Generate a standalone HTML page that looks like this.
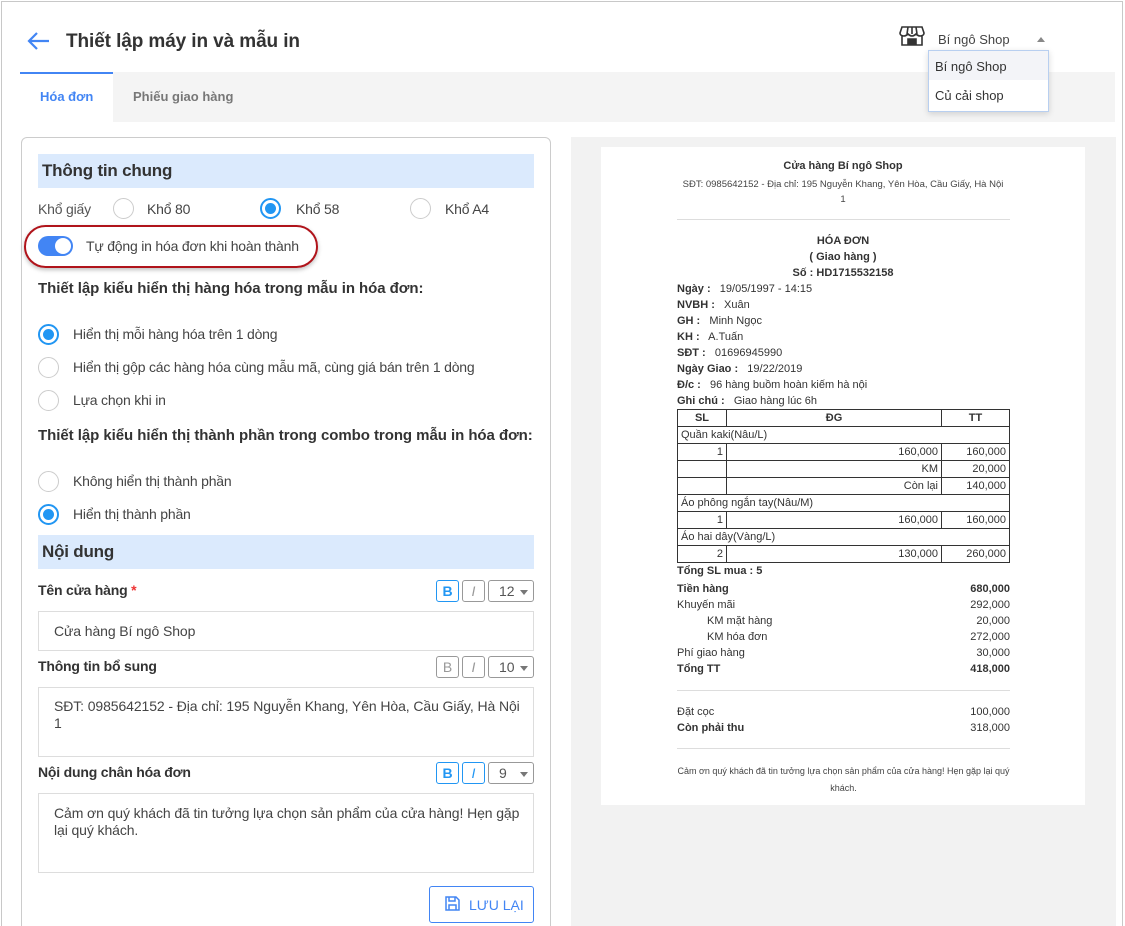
<!DOCTYPE html>
<html><head><meta charset="utf-8"><style>
*{box-sizing:border-box;margin:0;padding:0}
html,body{width:1125px;height:926px;overflow:hidden}
body{background:#fff;font-family:"Liberation Sans",sans-serif;color:#333;position:relative}
.a{position:absolute;white-space:nowrap}
.frame{position:absolute;left:1px;top:1px;width:1122px;height:940px;border:1px solid #c8c8c8}
.hdr{position:absolute;left:38px;width:496px;height:34px;background:#dbeafd;font-size:17px;font-weight:bold;color:#333;padding:7px 0 0 4px;letter-spacing:-0.2px}
.rad{position:absolute;width:21px;height:21px;border:1px solid #ccc;border-radius:50%;background:#fff}
.rad.on{border:2px solid #2196f3}
.rad.on::after{content:"";position:absolute;left:3px;top:3px;width:11px;height:11px;border-radius:50%;background:#2196f3}
.lb{font-size:14px;color:#444;letter-spacing:-0.2px}
.bh{font-size:15px;font-weight:bold;color:#333;letter-spacing:-0.05px}
.fl{font-size:14px;font-weight:bold;color:#333;letter-spacing:-0.2px}
.btn{position:absolute;width:23px;height:22px;border:1px solid #999;border-radius:3px;text-align:center;font-size:14px;line-height:20px;color:#999}
.btn.on{border-color:#2196f3;color:#2196f3}
.sel{position:absolute;width:46px;height:22px;border:1px solid #999;border-radius:3px;font-size:14px;line-height:20px;padding-left:10px;color:#555}
.sel::after{content:"";position:absolute;right:5px;top:9px;border:4px solid transparent;border-top:5px solid #777}
.inp{position:absolute;left:38px;width:496px;border:1px solid #ddd;font-size:14px;color:#444;padding:0 15px;line-height:17px;white-space:nowrap;overflow:hidden;letter-spacing:-0.1px}
.r{font-size:11px;color:#333}
table{border-collapse:collapse;font-size:11px;color:#333}
td{border:1px solid #333;height:17px;padding:0 3px;text-align:right}
</style></head><body>
<div class="frame"></div>
<svg class="a" style="left:26px;top:31px" width="24" height="20" viewBox="0 0 24 20"><path d="M23 10H3M11 2L3 10l8 8" fill="none" stroke="#4285f4" stroke-width="2.2"/></svg>
<div class="a" style="left:66px;top:31px;font-size:19px;font-weight:bold;color:#333;letter-spacing:-0.1px">Thiết lập máy in và mẫu in</div>
<svg class="a" style="left:899px;top:26px" width="26" height="20" viewBox="0 0 26 20"><path d="M3 1h20l2 6c0 2-2 3-4 3s-3-1-4-2c-1 1-2 2-4 2s-3-1-4-2c-1 1-2 2-4 2S1 9 1 7z M3 10v9h20v-9 M9 19v-6h8v6 M9 1L8 8 M17 1l1 7 M13 1v7" fill="none" stroke="#333" stroke-width="1.6"/><rect x="9" y="13" width="8" height="6" fill="#333"/></svg>
<div class="a" style="left:938px;top:32px;font-size:13px;color:#444">Bí ngô Shop</div>
<div class="a" style="left:1037px;top:37px;border:4px solid transparent;border-bottom:5px solid #888;border-top:0"></div>
<div class="a" style="left:20px;top:72px;width:1095px;height:50px;background:#f4f4f4"></div>
<div class="a" style="left:20px;top:72px;width:93px;height:50px;background:#fff;border-top:2px solid #4285f4"></div>
<div class="a" style="left:40px;top:89px;font-size:13px;font-weight:bold;color:#4285f4">Hóa đơn</div>
<div class="a" style="left:133px;top:89px;font-size:13px;font-weight:bold;color:#777">Phiếu giao hàng</div>
<div class="a" style="left:928px;top:50px;width:121px;height:62px;background:#fff;border:1px solid #b8cff0;box-shadow:0 2px 6px rgba(0,0,0,.15)"></div>
<div class="a" style="left:929px;top:51px;width:119px;height:29px;background:#f3f4f8"></div>
<div class="a" style="left:935px;top:59px;font-size:13px;color:#333">Bí ngô Shop</div>
<div class="a" style="left:935px;top:88px;font-size:13px;color:#333">Củ cải shop</div>

<div class="a" style="left:21px;top:137px;width:530px;height:800px;border:1px solid #ccc;border-radius:6px"></div>
<div class="hdr" style="top:154px">Thông tin chung</div>
<div class="a lb" style="left:38px;top:201px;color:#555">Khổ giấy</div>
<div class="rad" style="left:113px;top:198px"></div><div class="a lb" style="left:147px;top:201px">Khổ 80</div>
<div class="rad on" style="left:260px;top:198px"></div><div class="a lb" style="left:296px;top:201px">Khổ 58</div>
<div class="rad" style="left:410px;top:198px"></div><div class="a lb" style="left:445px;top:201px">Khổ A4</div>
<div class="a" style="left:24px;top:225px;width:294px;height:43px;border:2px solid #b0141b;border-radius:22px;box-shadow:0 2px 4px rgba(0,0,0,.25)"></div>
<div class="a" style="left:38px;top:236px;width:35px;height:20px;border-radius:10px;background:#4285f4"></div>
<div class="a" style="left:55px;top:238px;width:16px;height:16px;border-radius:50%;background:#fff"></div>
<div class="a lb" style="left:86px;top:238px">Tự động in hóa đơn khi hoàn thành</div>
<div class="a bh" style="left:38px;top:280px">Thiết lập kiểu hiển thị hàng hóa trong mẫu in hóa đơn:</div>
<div class="rad on" style="left:38px;top:324px"></div><div class="a lb" style="left:73px;top:326px">Hiển thị mỗi hàng hóa trên 1 dòng</div>
<div class="rad" style="left:38px;top:357px"></div><div class="a lb" style="left:73px;top:359px">Hiển thị gộp các hàng hóa cùng mẫu mã, cùng giá bán trên 1 dòng</div>
<div class="rad" style="left:38px;top:390px"></div><div class="a lb" style="left:73px;top:392px">Lựa chọn khi in</div>
<div class="a bh" style="left:38px;top:427px">Thiết lập kiểu hiển thị thành phần trong combo trong mẫu in hóa đơn:</div>
<div class="rad" style="left:38px;top:471px"></div><div class="a lb" style="left:73px;top:473px">Không hiển thị thành phần</div>
<div class="rad on" style="left:38px;top:504px"></div><div class="a lb" style="left:73px;top:506px">Hiển thị thành phần</div>
<div class="hdr" style="top:535px">Nội dung</div>

<div class="a fl" style="left:38px;top:582px">Tên cửa hàng <span style="color:#e33">*</span></div>
<div class="btn on" style="left:436px;top:580px;font-weight:bold">B</div><div class="btn" style="left:462px;top:580px;font-style:italic">I</div><div class="sel" style="left:488px;top:580px">12</div>
<div class="inp" style="top:611px;height:40px;padding-top:11px">Cửa hàng Bí ngô Shop</div>
<div class="a fl" style="left:38px;top:658px">Thông tin bổ sung</div>
<div class="btn" style="left:436px;top:656px">B</div><div class="btn" style="left:462px;top:656px;font-style:italic">I</div><div class="sel" style="left:488px;top:656px">10</div>
<div class="inp" style="top:687px;height:70px;padding-top:10px">SĐT: 0985642152 - Địa chỉ: 195 Nguyễn Khang, Yên Hòa, Cầu Giấy, Hà Nội<br>1</div>
<div class="a fl" style="left:38px;top:764px">Nội dung chân hóa đơn</div>
<div class="btn on" style="left:436px;top:762px;font-weight:bold">B</div><div class="btn on" style="left:462px;top:762px;font-style:italic">I</div><div class="sel" style="left:488px;top:762px">9</div>
<div class="inp" style="top:793px;height:80px;padding-top:11px">Cảm ơn quý khách đã tin tưởng lựa chọn sản phẩm của cửa hàng! Hẹn gặp<br>lại quý khách.</div>
<div class="a" style="left:429px;top:886px;width:105px;height:37px;border:1px solid #4285f4;border-radius:3px"></div>
<svg class="a" style="left:445px;top:896px" width="15" height="15" viewBox="0 0 15 15"><path d="M1 1h10l3 3v10H1z M4 1v4h6V1 M4 14V9h7v5" fill="none" stroke="#4285f4" stroke-width="1.5"/></svg>
<div class="a" style="left:469px;top:897px;font-size:14px;color:#4285f4">LƯU LẠI</div>

<div class="a" style="left:571px;top:137px;width:545px;height:800px;background:#f2f2f2"></div>
<div class="a" style="left:601px;top:147px;width:484px;height:658px;background:#fff"></div>
<div class="a" style="left:601px;top:160px;width:484px;text-align:center;font-size:11px;font-weight:bold;color:#333">Cửa hàng Bí ngô Shop</div>
<div class="a" style="left:601px;top:177px;width:484px;text-align:center;font-size:9.5px;color:#444;line-height:15px;white-space:normal">SĐT: 0985642152 - Địa chỉ: 195 Nguyễn Khang, Yên Hòa, Cầu Giấy, Hà Nội<br>1</div>
<div class="a" style="left:677px;top:219px;width:333px;border-top:1px solid #ddd"></div>
<div class="a" style="left:601px;top:233px;width:484px;text-align:center;font-size:11px;font-weight:bold;line-height:16px;color:#333">HÓA ĐƠN<br>( Giao hàng )<br>Số : HD1715532158</div>
<div class="a r" style="left:677px;top:281px;line-height:16px"><b>Ngày :</b> &nbsp; 19/05/1997 - 14:15<br><b>NVBH :</b> &nbsp; Xuân<br><b>GH :</b> &nbsp; Minh Ngọc<br><b>KH :</b> &nbsp; A.Tuấn<br><b>SĐT :</b> &nbsp; 01696945990<br><b>Ngày Giao :</b> &nbsp; 19/22/2019<br><b>Đ/c :</b> &nbsp; 96 hàng buồm hoàn kiếm hà nội<br><b>Ghi chú :</b> &nbsp; Giao hàng lúc 6h</div>
<table class="a" style="left:677px;top:409px;width:333px">
<tr><td style="width:49px;text-align:center;font-weight:bold">SL</td><td style="text-align:center;font-weight:bold">ĐG</td><td style="width:68px;text-align:center;font-weight:bold">TT</td></tr>
<tr><td colspan="3" style="text-align:left">Quần kaki(Nâu/L)</td></tr>
<tr><td>1</td><td>160,000</td><td>160,000</td></tr>
<tr><td></td><td>KM</td><td>20,000</td></tr>
<tr><td></td><td>Còn lại</td><td>140,000</td></tr>
<tr><td colspan="3" style="text-align:left">Áo phông ngắn tay(Nâu/M)</td></tr>
<tr><td>1</td><td>160,000</td><td>160,000</td></tr>
<tr><td colspan="3" style="text-align:left">Áo hai dây(Vàng/L)</td></tr>
<tr><td>2</td><td>130,000</td><td>260,000</td></tr>
</table>
<div class="a r" style="left:677px;top:565px;font-weight:bold">Tổng SL mua : 5</div>
<div class="a r" style="left:677px;top:581px;width:333px;line-height:16px;white-space:normal">
<div style="display:flex;justify-content:space-between;font-weight:bold"><span>Tiền hàng</span><span>680,000</span></div>
<div style="display:flex;justify-content:space-between"><span>Khuyến mãi</span><span>292,000</span></div>
<div style="display:flex;justify-content:space-between;padding-left:30px"><span>KM mặt hàng</span><span>20,000</span></div>
<div style="display:flex;justify-content:space-between;padding-left:30px"><span>KM hóa đơn</span><span>272,000</span></div>
<div style="display:flex;justify-content:space-between"><span>Phí giao hàng</span><span>30,000</span></div>
<div style="display:flex;justify-content:space-between;font-weight:bold"><span>Tổng TT</span><span>418,000</span></div>
</div>
<div class="a" style="left:677px;top:690px;width:333px;border-top:1px solid #ddd"></div>
<div class="a r" style="left:677px;top:704px;width:333px;line-height:16px;white-space:normal">
<div style="display:flex;justify-content:space-between"><span>Đặt cọc</span><span>100,000</span></div>
<div style="display:flex;justify-content:space-between"><span><b>Còn phải thu</b></span><span>318,000</span></div>
</div>
<div class="a" style="left:677px;top:748px;width:333px;border-top:1px solid #ddd"></div>
<div class="a" style="left:677px;top:763px;width:333px;text-align:center;font-size:9px;color:#444;line-height:17px;white-space:normal">Cảm ơn quý khách đã tin tưởng lựa chọn sản phẩm của cửa hàng! Hẹn gặp lại quý<br>khách.</div>
</body></html>
